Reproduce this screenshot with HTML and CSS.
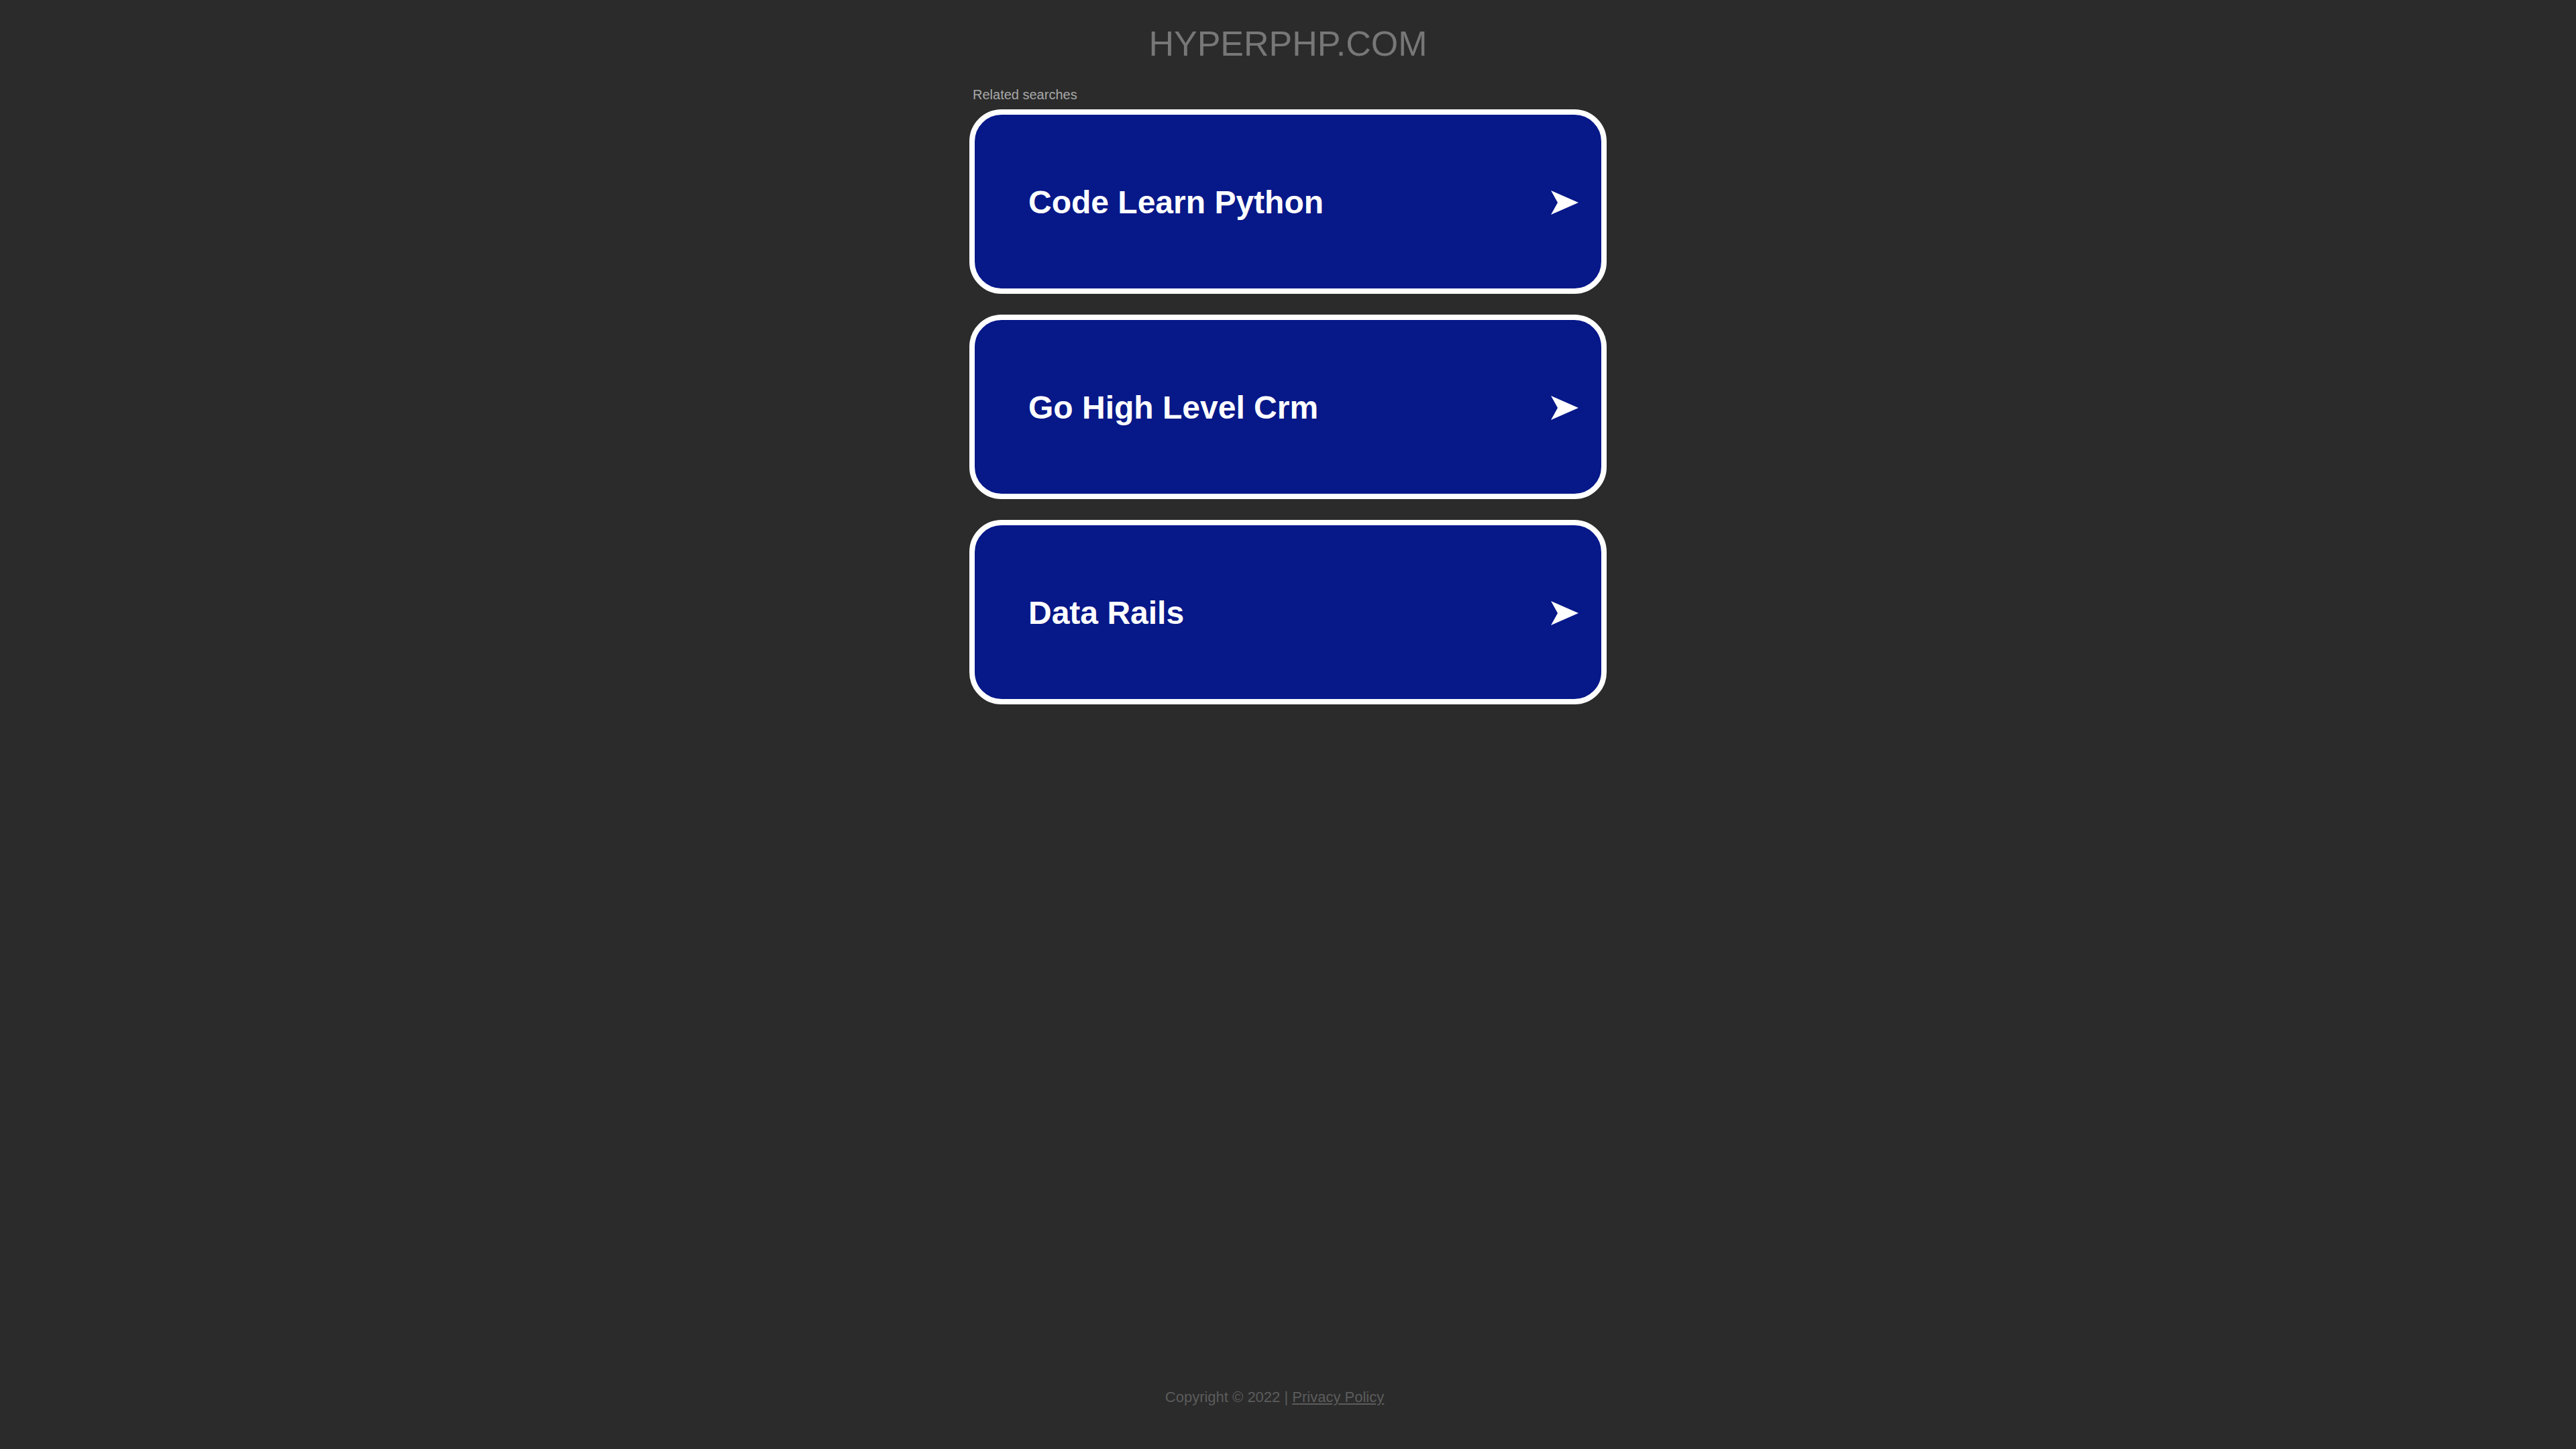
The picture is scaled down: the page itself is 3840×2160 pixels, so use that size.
FILE: index.html
```html
<!DOCTYPE html>
<html lang="en">
<head>
<meta charset="utf-8">
<title>hyperphp.com</title>
<link rel="stylesheet" href="styles.css">
</head>
<body>
<div class="page">
  <header class="site-title">HYPERPHP.COM</header>
  <main class="results">
    <div class="label">Related searches</div>
    <div class="cards">
      <a class="card" href="#">
        <span class="card-text">Code Learn Python</span>
        <svg class="arrow" viewBox="0 0 41 36" width="41" height="36"><polygon points="0,0 41,18 0,36 10,18" fill="#fff"/></svg>
      </a>
      <a class="card" href="#">
        <span class="card-text">Go High Level Crm</span>
        <svg class="arrow" viewBox="0 0 41 36" width="41" height="36"><polygon points="0,0 41,18 0,36 10,18" fill="#fff"/></svg>
      </a>
      <a class="card" href="#">
        <span class="card-text">Data Rails</span>
        <svg class="arrow" viewBox="0 0 41 36" width="41" height="36"><polygon points="0,0 41,18 0,36 10,18" fill="#fff"/></svg>
      </a>
    </div>
  </main>
  <footer class="footer">Copyright © 2022 | <a class="policy" href="#">Privacy Policy</a></footer>
</div>
</body>
</html>
```

FILE: styles.css
```css
html, body {
  margin: 0;
  padding: 0;
  background: #2b2b2b;
}
body {
  font-family: "Liberation Sans", Arial, sans-serif;
}
.page {
  min-height: 100vh;
  display: flex;
  flex-direction: column;
  align-items: center;
}
.site-title {
  padding-top: 35px;
  font-size: 52px;
  line-height: normal;
  color: #777777;
  text-align: center;
}
.results {
  margin-top: 35px;
  width: 950px;
  display: flex;
  flex-direction: column;
}
.label {
  font-size: 20px;
  line-height: normal;
  color: #a8a8a8;
  padding-left: 5px;
  margin-bottom: 10px;
}
.cards {
  display: flex;
  flex-direction: column;
  gap: 31px;
}
.card {
  box-sizing: border-box;
  height: 275px;
  border: 8px solid #ffffff;
  border-radius: 48px;
  background: #071889;
  display: flex;
  align-items: center;
  justify-content: space-between;
  padding: 2px 34px 0 80px;
  text-decoration: none;
}
.card-text {
  color: #ffffff;
  font-weight: bold;
  font-size: 48px;
}
.arrow {
  display: block;
}
.footer {
  margin-top: auto;
  padding-bottom: 64px;
  padding-right: 40px;
  font-size: 22px;
  line-height: normal;
  color: #5c5c5c;
}
.policy {
  color: #5c5c5c;
  text-decoration: underline;
}
```
